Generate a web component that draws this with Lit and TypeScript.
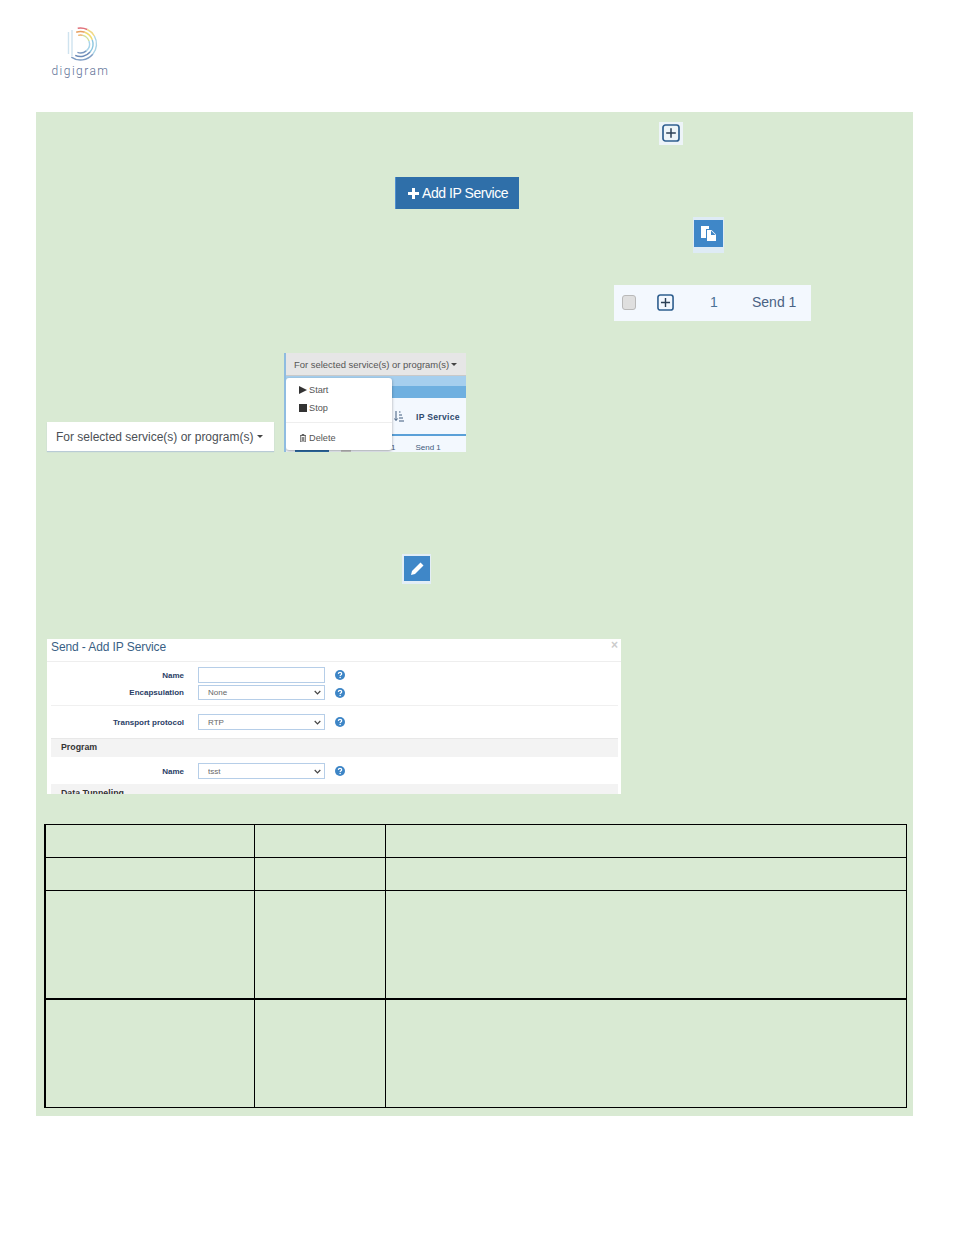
import { LitElement, html, css, svg } from "lit";
import { customElement } from "lit/decorators.js";

const plusBox = () => html`<svg viewBox="0 0 18 18"><rect x="1" y="1" width="16" height="16" rx="2.5" fill="none" stroke="#2f5f8f" stroke-width="1.7"/><path d="M9 4.2v9.6M4.2 9h9.6" stroke="#2b3f55" stroke-width="1.5" fill="none"/></svg>`;

const help = html`<svg class="help" viewBox="0 0 10 10"><circle cx="5" cy="5" r="5" fill="#3d85c6"/><path d="M3.3 3.9C3.4 2.9 4.1 2.4 5 2.4c1 0 1.7.6 1.7 1.4 0 1.2-1.6 1.2-1.6 2.2" fill="none" stroke="#fff" stroke-width="1.2"/><circle cx="5.1" cy="7.6" r=".75" fill="#fff"/></svg>`;

const arc = (r: number, a0: number, a1: number, color: string, w = 1.4) => {
  const p = (a: number) => [80.5 + r * Math.sin(a * Math.PI / 180), 44 - r * Math.cos(a * Math.PI / 180)].map(v => v.toFixed(2)).join(" ");
  return svg`<path d="M${p(a0)}A${r} ${r} 0 ${a1 - a0 > 180 ? 1 : 0} 1 ${p(a1)}" fill="none" stroke=${color} stroke-width=${w}/>`;
};

@customElement("app-root")
export class AppRoot extends LitElement {
  static styles = css`
    :host { display: block; min-height: 1235px; background: #fff; font-family: "Liberation Sans", Arial, sans-serif; }
    .logo-wrap { height: 112px; }
    .logo { display: block; width: 120px; height: 90px; }
    .logo-name { font-family: Roboto, sans-serif; font-weight: 300; font-size: 12px; letter-spacing: 1.45px; fill: #5d7096; }
    .panel { margin: 0 41px 0 36px; height: 1004px; background: #d9ead3; padding-top: 10px; box-sizing: border-box; }

    .plus-tile { margin-left: 623px; width: 24px; height: 23px; background: #edf4f8; display: flex; align-items: center; justify-content: center; padding: 0 1px 2px 0; box-sizing: border-box; }
    .plus-tile svg { width: 18px; height: 18px; }
    .add { margin: 32px 0 0 359px; width: 124px; height: 32px; box-sizing: border-box; background: #2f6fa9; border-left: 1px solid #4f8fd0; color: #fff; display: flex; align-items: center; padding-left: 12px; gap: 3px; font-size: 14px; letter-spacing: -0.45px; }
    .add svg { width: 11px; height: 11px; }
    .copy-tile { margin: 8px 0 0 657px; width: 31px; height: 36px; background: #deebf5; padding: 3px 1px 6px; box-sizing: border-box; }
    .copy-in { height: 27px; background: #3f87c8; display: flex; align-items: center; justify-content: center; }
    .copy-in svg { width: 17px; height: 17px; }

    .row { margin: 32px 0 0 578px; width: 197px; height: 36px; padding-bottom: 2px; box-sizing: border-box; background: #f3f8fe; display: flex; align-items: center; color: #4a6284; font-size: 14px; }
    .check { margin-left: 8px; width: 14px; height: 15px; background: #dfdfdf; border: 1px solid #b9b9b9; border-radius: 3px; box-sizing: border-box; }
    .row svg { margin-left: 21px; width: 17px; height: 17px; }
    .num { margin-left: 36px; width: 42px; color: #4a7296; }

    .drop-row { margin-top: 31px; height: 100px; display: flex; align-items: flex-end; }
    .drop { margin: 0 0 1px 11px; width: 227px; height: 29px; box-sizing: border-box; background: #fff; box-shadow: 0 1px 1px #b9cbd6; color: #4b4f55; font-size: 12px; padding-left: 9px; display: flex; align-items: center; gap: 4px; }
    .caret { width: 0; height: 0; border-left: 3px solid transparent; border-right: 3px solid transparent; border-top: 3px solid #444; }

    .shot { position: relative; margin-left: 10px; width: 182px; height: 99px; overflow: hidden; border-left: 2px solid #8fbce0; box-sizing: border-box; }
    .shot-btn { height: 23px; background: #e6e6e6; border-bottom: 1px solid #c9c9c9; box-sizing: border-box; color: #555; font-size: 9.45px; display: flex; align-items: center; gap: 2px; padding-left: 8px; }
    .shot-a { height: 10px; background: #a6cfee; }
    .shot-b { height: 12px; background: #6fb0e0; }
    .shot-head { height: 38px; background: #f3f8fe; border-bottom: 2px solid #5aa0d8; box-sizing: border-box; display: flex; align-items: center; padding: 0 0 0 108px; gap: 12px; color: #2f4a6d; font-weight: 700; font-size: 8.6px; letter-spacing: 0.3px; }
    .shot-head svg { width: 10px; height: 11px; margin-top: 1px; }
    .shot-head span { margin-top: 2px; }
    .shot-rowline { height: 16px; background: #f3f8fe; display: flex; align-items: flex-end; padding-left: 9px; color: #3f5a7c; font-size: 8px; line-height: 9px; }
    .dash { width: 34px; height: 2px; background: #2f6fa9; }
    .cellbox { margin-left: 12px; width: 10px; height: 3px; background: #c9c9c9; }
    .one { margin-left: 40px; }
    .send { margin-left: 20px; }
    .menu { position: absolute; left: 0; top: 25px; width: 106px; height: 72px; background: #fff; border-radius: 3px; box-shadow: 0 1px 3px rgba(0, 0, 0, 0.35); color: #555; font-size: 9.2px; }
    .mi { position: absolute; left: 13px; display: flex; align-items: center; gap: 2px; }
    .mi svg { width: 8px; height: 8px; }
    .m1 { top: 7px; }
    .m2 { top: 25px; }
    .m3 { top: 55px; }
    .mline { position: absolute; left: 0; right: 0; top: 44px; height: 1px; background: #eee; }

    .edit-tile { margin: 102px 0 0 366px; width: 29px; height: 30px; background: #e3eef6; padding: 2px 1px 3px 2px; box-sizing: border-box; }
    .edit-in { height: 25px; background: #3f87c8; display: flex; align-items: center; justify-content: center; }
    .edit-in svg { width: 15px; height: 15px; }

    .modal { margin: 55px 0 0 11px; width: 574px; height: 155px; background: #fff; overflow: hidden; position: relative; padding: 0 3px 0 4px; box-sizing: border-box; color: #2a4066; }
    .m-title { height: 23px; border-bottom: 1px solid #eee; margin: 0 -3px 0 -4px; padding: 1px 0 0 4px; box-sizing: border-box; font-size: 12px; line-height: 14px; letter-spacing: -0.1px; color: #3a5f85; }
    .x { position: absolute; right: 3px; top: 0; color: #ccc; font-size: 12px; font-weight: 700; line-height: 12px; }
    .f { display: grid; grid-template-columns: 133px 127px 10px; align-items: center; font-size: 8px; font-weight: 700; text-align: right; }
    .f input, .f select { width: 127px; height: 16px; box-sizing: border-box; border: 1px solid #b6cee8; background: #fff; font-family: inherit; font-size: 8px; color: #666; padding: 0 0 0 9px; margin: 0 0 0 14px; border-radius: 0; display: block; }
    .f select { appearance: none; background: #fff url("data:image/svg+xml,%3Csvg xmlns='http://www.w3.org/2000/svg' width='7' height='5'%3E%3Cpath d='M.7 1l2.8 2.8L6.3 1' fill='none' stroke='%23444' stroke-width='1.2'/%3E%3C/svg%3E") no-repeat right 3px center; }
    .help { width: 10px; height: 10px; display: block; margin-left: 23.5px; }
    .f1 { margin-top: 5px; }
    .f2 { margin-top: 2px; }
    .f2 select { height: 15px; }
    .hr { height: 1px; background: #f0f0f0; margin-top: 5px; }
    .f3 { margin-top: 8px; }
    .sec { background: #f3f3f3; height: 19px; margin-top: 8px; border-top: 1px solid #e8e8e8; box-sizing: border-box; padding: 0 0 2px 10px; font-size: 8.8px; font-weight: 700; color: #333; display: flex; align-items: center; }
    .f4 { margin-top: 6px; }
    .sec2 { margin-top: 5px; height: 19px; border-top: 0; align-items: flex-start; padding-top: 4px; }

    table { margin: 30px 0 0 8px; width: 863px; height: 283px; border-collapse: collapse; table-layout: fixed; border-left: 2px solid #000; }
    td { border: 1px solid #000; padding: 0; }
    .c1 { width: 208px; }
    .c2 { width: 130px; }
    .h1 { height: 32px; }
    .h2 { height: 32px; }
    .h3 { height: 107px; }
    .h4 { height: 107px; border-top: 2px solid #000; }
  `;

  render() {
    return html`
      <div class="logo-wrap">
        <svg class="logo" viewBox="0 0 120 90">
          <path d="M68.5 32v22M72 30v26" stroke="#cfe3ef" stroke-width="1.4" fill="none"/>
          ${arc(16, -10, 25, "#e0707a")}${arc(16, 25, 60, "#f0d884")}${arc(16, 60, 130, "#a9d3e6")}${arc(16, 130, 215, "#7f9dc4")}
          ${arc(12.5, -20, 20, "#e8a060")}${arc(12.5, 20, 70, "#f1dc6e")}${arc(12.5, 70, 130, "#8cc6e0")}${arc(12.5, 130, 205, "#6d8bb8")}
          ${arc(9, -15, 15, "#eeb56d")}${arc(9, 15, 70, "#cfe09a")}${arc(9, 70, 140, "#a8d4ea")}${arc(9, 140, 200, "#7a97c0")}
          <text class="logo-name" x="51.5" y="75">digigram</text>
        </svg>
      </div>
      <div class="panel">
        <div class="plus-tile">${plusBox()}</div>
        <div class="add">
          <svg viewBox="0 0 11 11"><path d="M5.5 0v11M0 5.5h11" stroke="#fff" stroke-width="3" fill="none"/></svg>
          <span>Add IP Service</span>
        </div>
        <div class="copy-tile"><div class="copy-in">
          <svg viewBox="0 0 17 17"><path d="M1 1h8v3H6v9H1z" fill="#fff"/><path d="M7 5h4.5L16 9.5V16H7z" fill="#fff"/><path d="M11 5.5V10h4.5" fill="#3f87c8"/></svg>
        </div></div>
        <div class="row">
          <div class="check"></div>
          ${plusBox()}
          <span class="num">1</span>
          <span>Send 1</span>
        </div>
        <div class="drop-row">
          <div class="drop"><span>For selected service(s) or program(s)</span><span class="caret"></span></div>
          <div class="shot">
            <div class="shot-btn"><span>For selected service(s) or program(s)</span><span class="caret"></span></div>
            <div class="shot-a"></div>
            <div class="shot-b"></div>
            <div class="shot-head">
              <svg viewBox="0 0 10 11"><path d="M2 0v9M.4 7.5 2 9.6l1.6-2.1M5 1h1.5M5 4h3M5 7h4M5 10h5" stroke="#3f5a7c" fill="none"/></svg>
              <span>IP Service</span>
            </div>
            <div class="shot-rowline"><span class="dash"></span><span class="cellbox"></span><span class="one">1</span><span class="send">Send 1</span></div>
            <div class="menu">
              <div class="mi m1"><svg viewBox="0 0 8 8"><path d="M0 0l8 4-8 4z" fill="#333"/></svg><span>Start</span></div>
              <div class="mi m2"><svg viewBox="0 0 8 8"><rect width="8" height="8" fill="#333"/></svg><span>Stop</span></div>
              <div class="mline"></div>
              <div class="mi m3"><svg viewBox="0 0 8 8"><path d="M1 1.5h6M3 1.5V.5h2v1M1.7 2v6h4.6V2M3.3 3v4M4.7 3v4" stroke="#444" stroke-width=".8" fill="none"/></svg><span>Delete</span></div>
            </div>
          </div>
        </div>
        <div class="edit-tile"><div class="edit-in">
          <svg viewBox="0 0 15 15"><path d="M10.5 1.5l3 3-8.5 8.5-4 1 1-4z" fill="#fff"/></svg>
        </div></div>
        <div class="modal">
          <div class="m-title">Send - Add IP Service</div>
          <div class="x">×</div>
          <div class="f f1"><span>Name</span><input />${help}</div>
          <div class="f f2"><span>Encapsulation</span><select><option>None</option></select>${help}</div>
          <div class="hr"></div>
          <div class="f f3"><span>Transport protocol</span><select><option>RTP</option></select>${help}</div>
          <div class="sec">Program</div>
          <div class="f f4"><span>Name</span><select><option>tsst</option></select>${help}</div>
          <div class="sec sec2">Data Tunneling</div>
        </div>
        <table>
          <tr><td class="c1 h1"></td><td class="c2 h1"></td><td class="h1"></td></tr>
          <tr><td class="h2"></td><td class="h2"></td><td class="h2"></td></tr>
          <tr><td class="h3"></td><td class="h3"></td><td class="h3"></td></tr>
          <tr><td class="h4"></td><td class="h4"></td><td class="h4"></td></tr>
        </table>
      </div>
    `;
  }
}
